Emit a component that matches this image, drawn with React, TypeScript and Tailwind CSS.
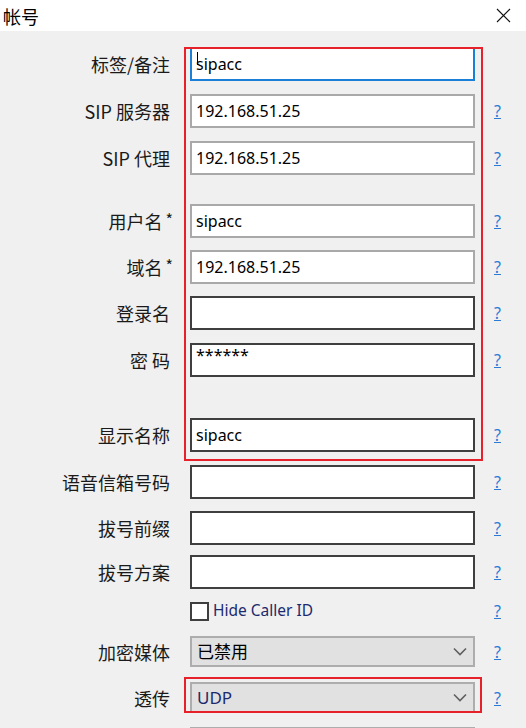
import React from 'react';

type Row = {
  label: string;
  kind: 'input' | 'select' | 'check';
  value?: string;
  mt: string;
  tone?: 'focus' | 'light' | 'dark';
  help?: boolean;
  blue?: boolean;
};

const ROWS: Row[] = [
  { label: '标签/备注', kind: 'input', value: 'sipacc', mt: 'mt-0', tone: 'focus', help: false },
  { label: 'SIP 服务器', kind: 'input', value: '192.168.51.25', mt: 'mt-[13px]', tone: 'light', help: true },
  { label: 'SIP 代理', kind: 'input', value: '192.168.51.25', mt: 'mt-[13px]', tone: 'light', help: true },
  { label: '用户名*', kind: 'input', value: 'sipacc', mt: 'mt-[29px]', tone: 'light', help: true },
  { label: '域名*', kind: 'input', value: '192.168.51.25', mt: 'mt-[12px]', tone: 'light', help: true },
  { label: '登录名', kind: 'input', value: '', mt: 'mt-[12px]', tone: 'dark', help: true },
  { label: '密 码', kind: 'input', value: '******', mt: 'mt-[13px]', tone: 'dark', help: true },
  { label: '显示名称', kind: 'input', value: 'sipacc', mt: 'mt-[41px]', tone: 'dark', help: true },
  { label: '语音信箱号码', kind: 'input', value: '', mt: 'mt-[13px]', tone: 'dark', help: true },
  { label: '拔号前缀', kind: 'input', value: '', mt: 'mt-[12px]', tone: 'dark', help: true },
  { label: '拔号方案', kind: 'input', value: '', mt: 'mt-[10px]', tone: 'dark', help: true },
  { label: '', kind: 'check', value: 'Hide Caller ID', mt: 'mt-[12px]', help: true },
  { label: '加密媒体', kind: 'select', value: '已禁用', mt: 'mt-[15px]', help: true },
  { label: '透传', kind: 'select', value: 'UDP', mt: 'mt-[15px]', help: true, blue: true },
  { label: '', kind: 'select', value: '', mt: 'mt-[14px]', help: false },
];

const toneClass = {
  focus: 'border-[#1a7fd6]',
  light: 'border-[#a9a9a9]',
  dark: 'border-[#3f3f3f]',
};

const Chevron = () => (
  <svg width="14" height="9" viewBox="0 0 14 9" className="shrink-0">
    <polyline points="1,1.5 7,7.5 13,1.5" fill="none" stroke="#5f5f5f" strokeWidth="1.6" />
  </svg>
);

function Field({ row }: { row: Row }) {
  if (row.kind === 'check') {
    return (
      <div className="flex items-center gap-[4px] h-[20px] w-[285px]">
        <div className="w-[19px] h-[19px] border-2 border-[#3f3f3f] bg-white" />
        <span className="text-[15.5px] text-[#1c2a6e] leading-none">{row.value}</span>
      </div>
    );
  }
  if (row.kind === 'select') {
    return (
      <div className="flex items-center h-[31px] w-[285px] border-2 border-[#adadad] bg-[#e1e1e1] pl-[5px] pr-[6px]">
        <span className={`flex-1 text-[17px] leading-none ${row.blue ? 'text-[#1c2a6e]' : 'text-black'}`}>
          {row.value}
        </span>
        <Chevron />
      </div>
    );
  }
  const isPwd = row.value === '******';
  return (
    <div
      className={`relative flex h-[34px] w-[285px] border-2 bg-white pl-[4px] ${toneClass[row.tone ?? 'dark']} ${
        isPwd ? 'items-start pt-[2px]' : 'items-center'
      }`}
    >
      {row.tone === 'focus' && <span className="absolute left-[5px] top-[3px] w-px h-[13px] bg-black" />}
      <span className="text-[16px] text-black leading-none">{row.value}</span>
    </div>
  );
}

export default function App() {
  return (
    <div
      className="w-[526px] h-[728px] overflow-hidden bg-[#f0f0f0] flex flex-col"
      style={{ fontFamily: '"Noto Sans", "Noto Sans CJK SC", sans-serif' }}
    >
      <div className="h-[31px] shrink-0 bg-white flex items-center justify-between pl-[3px] pr-[15px]">
        <span className="text-[18px] text-black leading-none" style={{ fontFamily: '"Noto Sans CJK SC", sans-serif' }}>
          帐号
        </span>
        <svg width="15" height="15" viewBox="0 0 15 15">
          <path d="M1 1 L14 14 M14 1 L1 14" stroke="#111" strokeWidth="1.1" />
        </svg>
      </div>

      <div className="relative flex-1 flex flex-col pt-[16px]">
        {ROWS.map((row, i) => (
          <div key={i} className={`flex items-center shrink-0 ${row.mt}`}>
            <div
              className="w-[170px] text-right text-[18px] text-[#1a1a1a] leading-none"
              style={{ fontFamily: '"Noto Sans CJK SC", sans-serif' }}
            >
              {row.label.endsWith('*') ? (
                <>
                  {row.label.slice(0, -1)}
                  <span className="text-[16px] align-top relative right-[-3px] top-[-1px]">*</span>
                </>
              ) : (
                row.label
              )}
            </div>
            <div className="ml-[20px]">
              <Field row={row} />
            </div>
            {row.help && (
              <span className="ml-[19px] text-[16px] text-[#2a7ad6] underline leading-none">?</span>
            )}
          </div>
        ))}

        {/* annotation boxes */}
        <div className="absolute left-[184px] top-[16px] w-[299px] h-[414px] border-2 border-[#e8202a] pointer-events-none" />
        <div className="absolute left-[184px] top-[646px] w-[298px] h-[36px] border-2 border-[#e8202a] pointer-events-none" />
      </div>
    </div>
  );
}
